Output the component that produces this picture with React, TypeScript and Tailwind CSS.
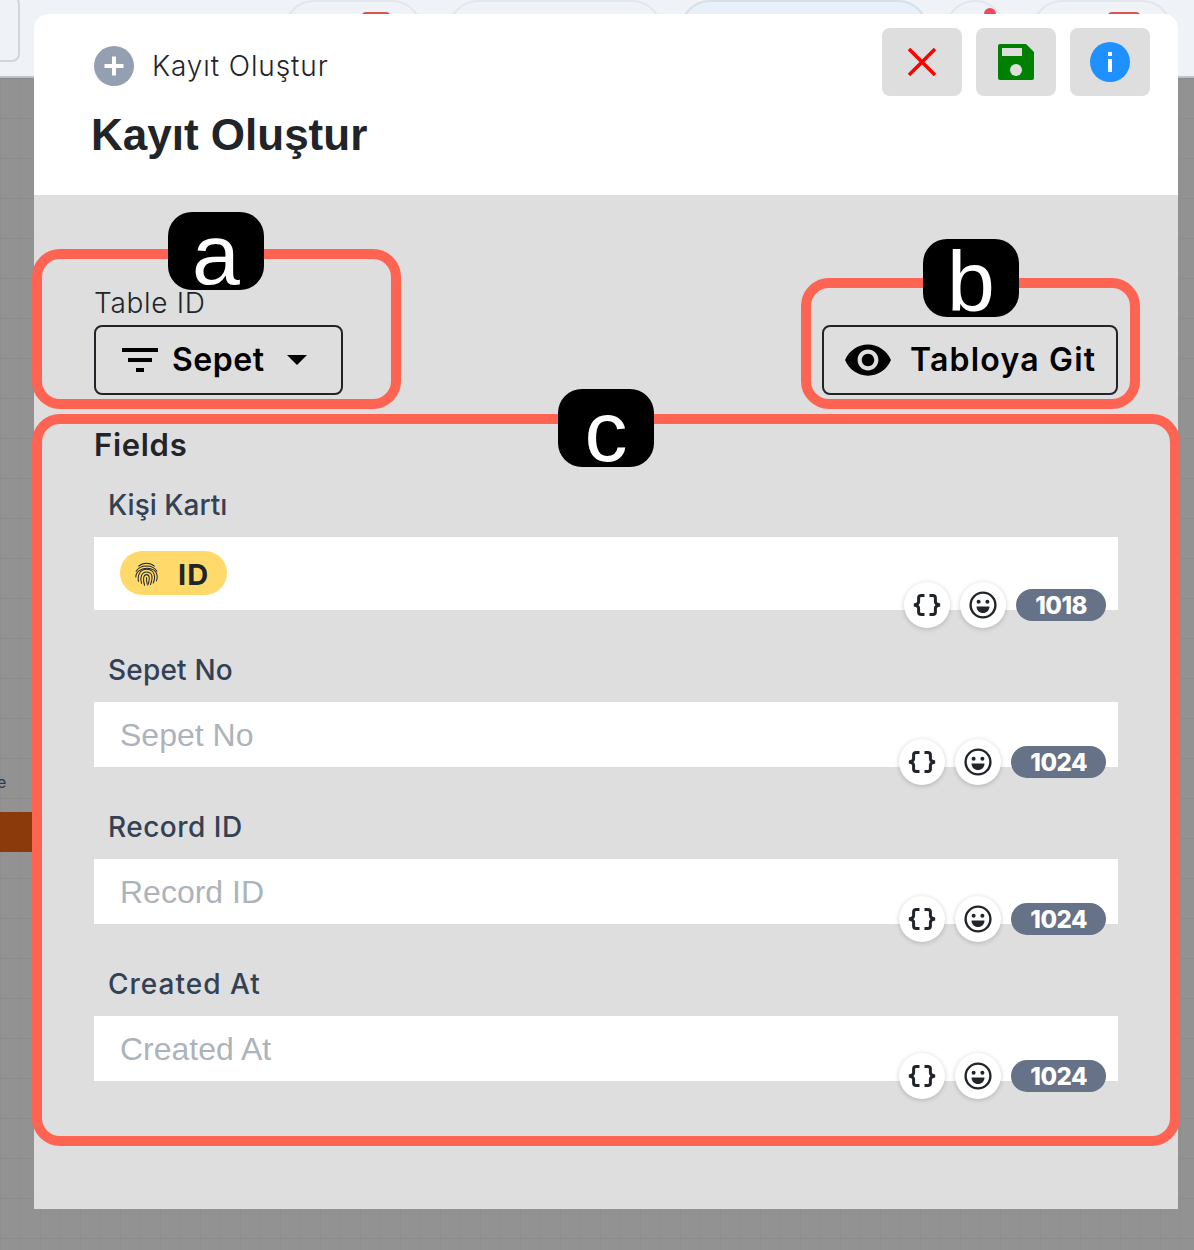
import { MdFilterList, MdVisibility } from 'react-icons/md';

interface FieldRow {
  label: string;
  count: number;
  labelClass: string;
  placeholder?: string;
}

const fields: FieldRow[] = [
  { label: 'Kişi Kartı', count: 1018, labelClass: 'tracking-normal' },
  { label: 'Sepet No', count: 1024, labelClass: 'tracking-[0.2px]', placeholder: 'Sepet No' },
  { label: 'Record ID', count: 1024, labelClass: 'tracking-[0.5px]', placeholder: 'Record ID' },
  { label: 'Created At', count: 1024, labelClass: 'tracking-[1px]', placeholder: 'Created At' },
];

function BracesIcon() {
  return (
    <svg viewBox="0 0 28 28" className="h-[28px] w-[28px]" fill="none" stroke="#212529" strokeWidth="3">
      <path d="M11.500 4.500H8.200C6.400 4.500 5.600 5.500 5.600 7V10.800C5.600 12.400 4.200 13.600 1 14C4.200 14.400 5.600 15.600 5.600 17.200V21C5.600 22.500 6.400 23.500 8.200 23.500H11.500" />
      <path d="M16.500 4.500h3.300c1.800 0 2.600 1 2.600 2.500v3.800c0 1.600 1.400 2.800 4.600 3.200-3.200.4-4.600 1.600-4.600 3.200V21c0 1.500-.8 2.500-2.600 2.500h-3.300" />
    </svg>
  );
}

function SmileIcon() {
  return (
    <svg viewBox="0 0 28 28" className="h-[28px] w-[28px]" fill="none">
      <circle cx="14" cy="14" r="12.400" stroke="#212529" strokeWidth="2.400" />
      <circle cx="9.600" cy="10.800" r="2" fill="#212529" />
      <circle cx="18.400" cy="10.800" r="2" fill="#212529" />
      <path d="M7.500 15.500h13c0 3.800-2.900 6.500-6.500 6.500s-6.500-2.700-6.500-6.500z" fill="#212529" />
    </svg>
  );
}

function FingerprintIcon() {
  return (
    <svg viewBox="0 0 24 24" className="h-[27px] w-[27px]" fill="none" stroke="#212529" strokeWidth="0.9" strokeLinecap="round">
      <path d="M5 5.500c3.800-3.400 10.200-3.400 14 0" />
      <path d="M2.800 10c3.600-6.200 14.800-6.400 18.400 0" />
      <path d="M2.500 15c0-9.600 19-11 19 0 0 1.600-.3 2.600-.7 3.600" />
      <path d="M4.800 19c-1-6.500 2.200-10.800 7.200-10.800 4.600 0 7.400 3 7.200 7.300-.1 2-.5 3.500-1.200 5" />
      <path d="M7.500 20.800c-1.500-5 .1-10.200 4.600-10.200 3.600 0 5 2.600 4.800 5.600-.1 2-.6 4-1.400 5.600" />
      <path d="M10.300 22.400c-1.400-3.800-1.500-9.400 1.800-9.400 3.200 0 2.800 5.400 1 9.200" />
      <path d="M12 15.500c0 2.400.1 4 .6 6" />
    </svg>
  );
}

function FieldActions({ count }: { count: number }) {
  return (
    <div className="absolute right-[12px] bottom-[-18px] flex items-center gap-[10px]">
      <span className="flex h-[46px] w-[46px] items-center justify-center rounded-full bg-white shadow-[0_1px_5px_rgba(0,0,0,0.2)]">
        <BracesIcon />
      </span>
      <span className="flex h-[46px] w-[46px] items-center justify-center rounded-full bg-white shadow-[0_1px_5px_rgba(0,0,0,0.2)]">
        <SmileIcon />
      </span>
      <span className="flex h-[32px] items-center rounded-full bg-[#667287] px-[19px] pt-[1px] text-[24px] font-extrabold tracking-[-0.5px] text-white">
        {count}
      </span>
    </div>
  );
}

function Field({ field }: { field: FieldRow }) {
  return (
    <div className="mb-[44px]">
      <label className={`mb-[16px] block h-[32px] pl-[14px] text-[28px] leading-[32px] font-medium text-[#334155] ${field.labelClass}`}>
        {field.label}
      </label>
      <div className="relative">
        {field.placeholder ? (
          <input
            readOnly
            placeholder={field.placeholder}
            className="block h-[65px] w-full bg-white px-[26px] pt-[2px] font-['Liberation_Sans',sans-serif] text-[32px] outline-none placeholder:text-[#adb3ba]"
          />
        ) : (
          <div className="flex h-[73px] items-start bg-white pt-[14px] pl-[26px]">
            <span className="flex h-[44px] w-[107px] items-center gap-[18px] rounded-full bg-[#ffda6a] pl-[13px] text-[29px] font-bold tracking-[1px] text-[#212529]">
              <FingerprintIcon />
              <span className="pt-[3px]">ID</span>
            </span>
          </div>
        )}
        <FieldActions count={field.count} />
      </div>
    </div>
  );
}

function Callout({ letter, box, tag }: { letter: string; box: string; tag: string }) {
  return (
    <>
      <div className={`pointer-events-none absolute rounded-[28px] border-[10px] border-[#ff6352] ${box}`} />
      <div
        className={`absolute flex h-[78px] w-[96px] items-center justify-center rounded-[24px] bg-black font-['Liberation_Sans',sans-serif] text-[86px] leading-none text-white ${tag}`}
      >
        <span className="mt-[6px]">{letter}</span>
      </div>
    </>
  );
}

export default function App() {
  return (
    <div className="relative h-[1250px] w-[1194px] overflow-hidden bg-[#929292] bg-[linear-gradient(to_right,#8e8e8e_1px,transparent_1px),linear-gradient(to_bottom,#8c8c8c_1px,transparent_1px)] bg-[size:20px_40px] bg-[position:0_38px] font-['Inter',sans-serif]">
      {/* browser strip behind the modal */}
      <div className="relative h-[78px] border-b-2 border-[#bcc3cb] bg-[#eff2f6]">
        <div className="absolute top-[-4px] left-[-30px] h-[66px] w-[50px] rounded-[8px] border-2 border-[#cfd6de]" />
        <div className="absolute top-0 left-[284px] h-[40px] w-[138px] rounded-t-[30px] border-2 border-[#e2e6ee]" />
        <div className="absolute top-[12px] left-[362px] h-[4px] w-[28px] rounded-t-full bg-[#d9534f]" />
        <div className="absolute top-0 left-[448px] h-[40px] w-[214px] rounded-t-[30px] border-2 border-[#e2e6ee]" />
        <div className="absolute top-0 left-[680px] h-[40px] w-[248px] rounded-t-[30px] border-2 border-[#d5dee9] bg-[#e8f0f9]" />
        <div className="absolute top-0 left-[945px] h-[40px] w-[60px] rounded-t-[30px] border-2 border-[#e2e6ee]" />
        <div className="absolute top-[8px] left-[984px] h-[12px] w-[12px] rounded-full bg-[#f0475a]" />
        <div className="absolute top-0 left-[1032px] h-[40px] w-[140px] rounded-t-[30px] border-2 border-[#e2e6ee]" />
        <div className="absolute top-[12px] left-[1108px] h-[4px] w-[32px] rounded-t-full bg-[#d9534f]" />
      </div>
      <span className="absolute top-[770px] left-[-3px] text-[16px] text-[#2f3a4a]">e</span>
      <div className="absolute top-[812px] left-0 h-[40px] w-[34px] bg-[#8b3a0c]" />

      {/* modal */}
      <div className="absolute top-[14px] left-[34px] h-[1195px] w-[1144px] rounded-t-[14px] bg-[#dedede]">
        <header className="relative h-[181px] rounded-t-[14px] bg-white px-[57px] pt-[32px]">
          <div className="flex h-[40px] items-center gap-[18px] pl-[3px] text-[28px] font-light tracking-[0.9px] text-[#212529]">
            <svg viewBox="0 0 40 40" className="h-[40px] w-[40px]">
              <circle cx="20" cy="20" r="20" fill="#94a0b2" />
              <path d="M20 10.500v19M10.500 20h19" stroke="#fff" strokeWidth="4" />
            </svg>
            <span>Kayıt Oluştur</span>
          </div>
          <h1 className="mt-[21px] font-['Liberation_Sans',sans-serif] text-[44px] leading-[56px] font-bold text-[#212529]">
            Kayıt Oluştur
          </h1>
          <div className="absolute top-[14px] right-[28px] flex gap-[14px]">
            <button className="flex h-[68px] w-[80px] items-center justify-center rounded-[8px] bg-[#dedede]">
              <svg viewBox="0 0 28 28" className="h-[28px] w-[28px]">
                <path d="M1 1l26 26M27 1L1 27" stroke="#ff0000" strokeWidth="3.500" />
              </svg>
            </button>
            <button className="flex h-[68px] w-[80px] items-center justify-center rounded-[8px] bg-[#dedede]">
              <svg viewBox="0 0 36 36" className="h-[36px] w-[36px]">
                <path
                  d="M2 0h26l8 8v26a2 2 0 0 1-2 2H2a2 2 0 0 1-2-2V2a2 2 0 0 1 2-2z"
                  fill="#008000"
                />
                <rect x="4" y="4" width="20" height="8" fill="#dedede" />
                <circle cx="18" cy="26" r="6" fill="#dedede" />
              </svg>
            </button>
            <button className="flex h-[68px] w-[80px] items-center justify-center rounded-[8px] bg-[#dedede]">
              <svg viewBox="0 0 40 40" className="h-[40px] w-[40px]">
                <circle cx="20" cy="20" r="20" fill="#1e90ff" />
                <rect x="18" y="17" width="4" height="13" fill="#fff" />
                <rect x="18" y="10" width="4" height="4" fill="#fff" />
              </svg>
            </button>
          </div>
        </header>

        <div className="px-[60px] pt-[94px]">
          <div className="flex items-end justify-between">
            <div>
              <div className="mb-[8px] h-[28px] text-[28px] leading-[28px] font-light tracking-[0.7px] text-[#212529]">
                Table ID
              </div>
              <button className="flex h-[70px] w-[249px] items-center rounded-[8px] border-2 border-[#212529] pl-[26px] text-black">
                <MdFilterList size={48} className="mx-[-6px]" />
                <span className="ml-[14px] text-[32px] font-semibold tracking-[0.5px]">Sepet</span>
                <svg viewBox="0 0 20 10" className="ml-[23px] h-[10px] w-[20px]">
                  <path d="M0 0h20L10 10z" fill="#000" />
                </svg>
              </button>
            </div>
            <button className="flex h-[70px] w-[296px] items-center rounded-[8px] border-2 border-[#212529] pl-[23px] text-black">
              <MdVisibility size={50} className="mx-[-4px]" />
              <span className="ml-[21px] text-[32px] font-semibold tracking-[1.2px]">Tabloya Git</span>
            </button>
          </div>

          <h2 className="mt-[30px] mb-[24px] h-[40px] text-[31px] leading-[40px] font-semibold tracking-[0.7px] text-[#212529]">
            Fields
          </h2>
          {fields.map((field) => (
            <Field key={field.label} field={field} />
          ))}
        </div>
      </div>

      <Callout letter="a" box="left-[32px] top-[249px] h-[160px] w-[369px]" tag="left-[168px] top-[212px]" />
      <Callout letter="b" box="left-[801px] top-[278px] h-[131px] w-[339px]" tag="left-[923px] top-[239px]" />
      <Callout letter="c" box="left-[32px] top-[414px] h-[732px] w-[1148px]" tag="left-[558px] top-[389px]" />
    </div>
  );
}
